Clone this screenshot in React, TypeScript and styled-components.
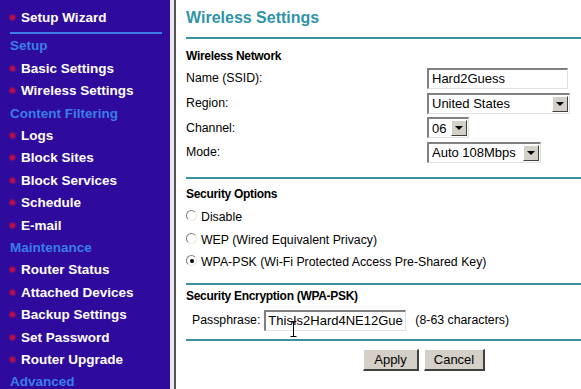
import React, { FC } from "react";
import styled, { createGlobalStyle } from "styled-components";

const GlobalStyle = createGlobalStyle`
  html, body {
    margin: 0;
    padding: 0;
    background: #ffffff;
    overflow: hidden;
  }
  body {
    font-family: "Liberation Sans", Arial, sans-serif;
  }
`;

type NavEntry = { label: string; header?: boolean };

const menu: NavEntry[] = [
  { label: "Setup", header: true },
  { label: "Basic Settings" },
  { label: "Wireless Settings" },
  { label: "Content Filtering", header: true },
  { label: "Logs" },
  { label: "Block Sites" },
  { label: "Block Services" },
  { label: "Schedule" },
  { label: "E-mail" },
  { label: "Maintenance", header: true },
  { label: "Router Status" },
  { label: "Attached Devices" },
  { label: "Backup Settings" },
  { label: "Set Password" },
  { label: "Router Upgrade" },
  { label: "Advanced", header: true },
];

const App: FC = () => {
  return (
    <Page>
      <GlobalStyle />
      <Sidebar>
        <NavItem>
          <Bullet />
          Setup Wizard
        </NavItem>
        <NavRule />
        {menu.map((m, idx) =>
          m.header ? (
            <NavHeader key={idx}>{m.label}</NavHeader>
          ) : (
            <NavItem key={idx}>
              <Bullet />
              {m.label}
            </NavItem>
          )
        )}
      </Sidebar>
      <Content>
        <Title>Wireless Settings</Title>
        <Rule />
        <SectionTitle $top={8}>Wireless Network</SectionTitle>
        <FormRow>
          <span>Name (SSID):</span>
          <TextBox $width={141}>Hard2Guess</TextBox>
        </FormRow>
        <FormRow>
          <span>Region:</span>
          <Select $width={143}>
            <span>United States</span>
            <DropButton />
          </Select>
        </FormRow>
        <FormRow>
          <span>Channel:</span>
          <Select $width={42}>
            <span>06</span>
            <DropButton />
          </Select>
        </FormRow>
        <FormRow>
          <span>Mode:</span>
          <Select $width={114}>
            <span>Auto 108Mbps</span>
            <DropButton />
          </Select>
        </FormRow>
        <Rule $top={12} />
        <SectionTitle $top={6}>Security Options</SectionTitle>
        <RadioList>
          <RadioRow>
            <Radio />
            Disable
          </RadioRow>
          <RadioRow>
            <Radio />
            WEP (Wired Equivalent Privacy)
          </RadioRow>
          <RadioRow>
            <Radio $checked />
            WPA-PSK (Wi-Fi Protected Access Pre-Shared Key)
          </RadioRow>
        </RadioList>
        <Rule $top={10} />
        <SectionTitle $top={2}>Security Encryption (WPA-PSK)</SectionTitle>
        <PassRow>
          <span>Passphrase:</span>
          <PassBox>
            ThisIs2Hard4NE12Gue
            <IBeam viewBox="0 0 7 16" width="7" height="16">
              <path d="M0.5 0.5h6M3.5 0.5v15M0.5 15.5h6" stroke="#000" strokeWidth="1" fill="none" />
            </IBeam>
          </PassBox>
          <span>(8-63 characters)</span>
        </PassRow>
        <Rule $top={7} />
        <Buttons>
          <Button $width={56}>Apply</Button>
          <Button $width={61}>Cancel</Button>
        </Buttons>
      </Content>
    </Page>
  );
};

const Page = styled.div`
  display: flex;
  width: 581px;
  height: 389px;
  overflow: hidden;
`;

const Sidebar = styled.div`
  width: 170px;
  flex-shrink: 0;
  background: #2e0b9c;
  padding-top: 6px;
  box-sizing: border-box;
  font-size: 13.5px;
  font-weight: bold;
`;

const NavItem = styled.div`
  display: flex;
  align-items: center;
  height: 22.4px;
  color: #ffffff;
  padding-left: 9px;
  white-space: nowrap;
`;

const NavHeader = styled.div`
  display: flex;
  align-items: center;
  height: 22.4px;
  color: #3a7ee8;
  padding-left: 10px;
  white-space: nowrap;
`;

const Bullet = styled.span`
  width: 5px;
  height: 5px;
  border-radius: 50%;
  background: #b80f4a;
  box-shadow: 0 0 2px 1px rgba(170, 20, 90, 0.55);
  margin: 0 6px 0 1px;
  flex-shrink: 0;
`;

const NavRule = styled.div`
  height: 2px;
  background: #3a7ee8;
  margin: 4px 8px 0.4px 10px;
`;

const Content = styled.div`
  flex: 1;
  margin-left: 4px;
  border-left: 2px solid #555555;
  padding-left: 10px;
  box-shadow: -4px 0 0 #e8e8ee;
  font-size: 12.3px;
  color: #000000;
  display: flex;
  flex-direction: column;
`;

const Title = styled.div`
  padding-top: 6px;
  height: 24px;
  line-height: 24px;
  font-size: 16px;
  font-weight: bold;
  color: #2f93a8;
`;

const Rule = styled.div<{ $top?: number }>`
  height: 2px;
  background: #3a8fa2;
  margin-top: ${(p) => p.$top ?? 7}px;
  flex-shrink: 0;
`;

const SectionTitle = styled.div<{ $top: number }>`
  margin-top: ${(p) => p.$top}px;
  height: 19px;
  line-height: 19px;
  font-size: 12px;
  font-weight: bold;
  letter-spacing: -0.3px;
`;

const FormRow = styled.div`
  display: grid;
  grid-template-columns: 241px auto;
  align-items: center;
  height: 24.7px;
`;

const insetBorder = `
  border-top: 2px solid #808080;
  border-left: 2px solid #808080;
  border-right: 1px solid #e0e0e0;
  border-bottom: 1px solid #e0e0e0;
  box-sizing: border-box;
  background: #ffffff;
  font-size: 13px;
`;

const TextBox = styled.div<{ $width: number }>`
  ${insetBorder}
  width: ${(p) => p.$width}px;
  height: 21px;
  line-height: 18px;
  padding-left: 3px;
  white-space: nowrap;
  overflow: hidden;
`;

const Select = styled.div<{ $width: number }>`
  ${insetBorder}
  width: ${(p) => p.$width}px;
  height: 21px;
  display: flex;
  align-items: center;
  justify-content: space-between;
  padding-left: 3px;
  padding-right: 1px;
  white-space: nowrap;
`;

const DropButton = styled.span`
  width: 16px;
  height: 16px;
  box-sizing: border-box;
  background: #d4d0c8;
  border-top: 1px solid #ffffff;
  border-left: 1px solid #ffffff;
  border-right: 1px solid #404040;
  border-bottom: 1px solid #404040;
  position: relative;
  flex-shrink: 0;
  &::after {
    content: "";
    position: absolute;
    left: 3px;
    top: 5px;
    border-left: 4px solid transparent;
    border-right: 4px solid transparent;
    border-top: 4px solid #000000;
  }
`;

const RadioList = styled.div`
  margin-top: 2px;
  display: flex;
  flex-direction: column;
`;

const RadioRow = styled.div`
  display: flex;
  align-items: center;
  height: 22.5px;
  gap: 4px;
`;

const Radio = styled.span<{ $checked?: boolean }>`
  width: 11px;
  height: 11px;
  box-sizing: border-box;
  border-radius: 50%;
  border: 1px solid #808080;
  border-right-color: #e8e8e8;
  border-bottom-color: #e8e8e8;
  background: #ffffff;
  position: relative;
  margin-top: -3px;
  &::after {
    content: "";
    display: ${(p) => (p.$checked ? "block" : "none")};
    position: absolute;
    left: 2.5px;
    top: 2.5px;
    width: 4px;
    height: 4px;
    border-radius: 50%;
    background: #000000;
  }
`;

const PassRow = styled.div`
  display: flex;
  align-items: center;
  height: 24px;
  margin-top: 2px;
  padding-left: 6px;
  gap: 9px;
  white-space: nowrap;
  span:first-child {
    margin-right: -5px;
  }
`;

const PassBox = styled.div`
  ${insetBorder}
  position: relative;
  width: 142px;
  height: 21px;
  line-height: 18px;
  padding-left: 2px;
  overflow: visible;
`;

const IBeam = styled.svg`
  position: absolute;
  left: 24px;
  top: 9px;
`;

const Buttons = styled.div`
  display: flex;
  gap: 5px;
  margin-top: 8px;
  padding-left: 177px;
`;

const Button = styled.button<{ $width: number }>`
  width: ${(p) => p.$width}px;
  height: 22px;
  padding: 0;
  background: #d4d0c8;
  border-top: 1px solid #ffffff;
  border-left: 1px solid #ffffff;
  border-right: 2px solid #404040;
  border-bottom: 2px solid #404040;
  font-family: "Liberation Sans", Arial, sans-serif;
  font-size: 13px;
  color: #000000;
`;

export default App;
